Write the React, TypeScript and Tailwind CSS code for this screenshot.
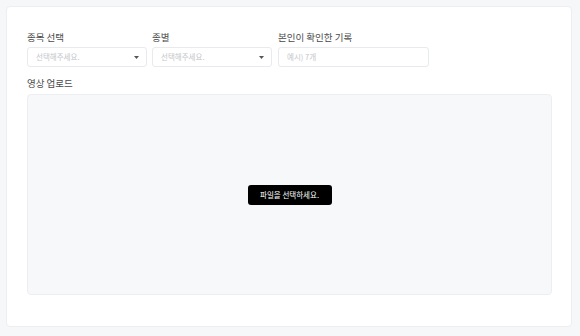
const font = { fontFamily: '"Noto Sans CJK KR", "Noto Sans", sans-serif' }

function Caret() {
  return (
    <svg width="5" height="3" viewBox="0 0 5 3" className="shrink-0">
      <path d="M0 0 L5 0 L2.5 3 Z" fill="#555" />
    </svg>
  )
}

function SelectBox({ placeholder }: { placeholder: string }) {
  return (
    <div className="w-[120px] h-[20px] flex items-center justify-between pl-[8px] pr-[7px] rounded-[3px] border border-[#e8eaed] bg-white">
      <span className="text-[7.5px] text-[#c4c6ca] leading-none">{placeholder}</span>
      <Caret />
    </div>
  )
}

export default function App() {
  return (
    <div className="w-[580px] h-[336px] bg-[#f6f7f9] pt-[6px] pl-[6px]" style={font}>
      <div className="w-[566px] h-[321px] bg-white border border-[#eceef1] rounded-[4px] px-[20px] pt-[23px]">
        <div className="flex gap-[5px]">
          <div className="flex flex-col">
            <label className="h-[14px] leading-[14px] text-[9.5px] text-[#4a4a4a] mb-[3px]">종목 선택</label>
            <SelectBox placeholder="선택해주세요." />
          </div>
          <div className="flex flex-col">
            <label className="h-[14px] leading-[14px] text-[9.5px] text-[#4a4a4a] mb-[3px]">종별</label>
            <SelectBox placeholder="선택해주세요." />
          </div>
          <div className="flex flex-col ml-[1px]">
            <label className="h-[14px] leading-[14px] text-[9.5px] text-[#4a4a4a] mb-[3px]">본인이 확인한 기록</label>
            <div className="w-[151px] h-[20px] flex items-center pl-[8px] rounded-[3px] border border-[#e8eaed] bg-white">
              <span className="text-[7.5px] text-[#c4c6ca] leading-none">예시) 7개</span>
            </div>
          </div>
        </div>

        <div className="mt-[9px]">
          <label className="block h-[14px] leading-[14px] text-[9.5px] text-[#4a4a4a] mb-[4px]">영상 업로드</label>
          <div className="w-[525px] h-[201px] bg-[#f7f8fa] border border-[#eceef1] rounded-[4px] flex items-center justify-center">
            <button className="w-[84px] h-[20px] bg-black text-white rounded-[3px] text-[7.5px] leading-none">
              파일을 선택하세요.
            </button>
          </div>
        </div>
      </div>
    </div>
  )
}
